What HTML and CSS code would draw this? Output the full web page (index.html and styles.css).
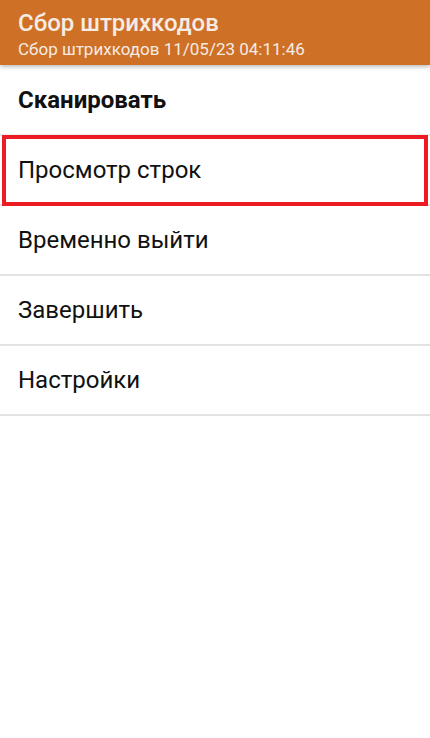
FILE: index.html
```html
<!DOCTYPE html>
<html lang="ru">

<head>
    <meta charset="UTF-8">
    <meta name="viewport" content="width=device-width, initial-scale=1.0">
    <title>Сбор штрихкодов</title>
    <link rel="stylesheet" href="styles.css">
</head>

<body>
    <header class="app-bar">
        <div class="app-title">Сбор штрихкодов</div>
        <div class="app-subtitle">Сбор штрихкодов 11/05/23 04:11:46</div>
    </header>

    <ul class="menu">
        <li class="menu-item menu-head">Сканировать</li>
        <li class="menu-item highlighted">Просмотр строк</li>
        <li class="menu-item">Временно выйти</li>
        <li class="menu-item">Завершить</li>
        <li class="menu-item">Настройки</li>
    </ul>
</body>

</html>
```

FILE: styles.css
```css
body,
html {
    margin: 0;
    padding: 0;
    background-color: #fff;
    font-family: Roboto, 'Noto Sans', sans-serif;
}

.app-bar {
    position: relative;
    z-index: 1;
    height: 65px;
    box-sizing: border-box;
    padding: 9px 18px 0;
    background-color: #cf7027;
    color: #f5ece4;
    box-shadow: 0 2px 4px rgba(0, 0, 0, 0.25);
}

.app-title {
    font-size: 24px;
    font-weight: 500;
    line-height: 29px;
}

.app-subtitle {
    font-size: 17px;
    line-height: 22px;
}

.menu {
    list-style: none;
    margin: 0;
    padding: 0;
}

.menu-item {
    position: relative;
    height: 68px;
    padding: 0 18px;
    display: flex;
    align-items: center;
    font-size: 24px;
    color: #111;
    border-bottom: 2px solid #e3e3e3;
}

.menu-head {
    font-weight: bold;
    height: 69px;
    border-bottom-color: #ececec;
}

/* red frame drawn over the row */
.highlighted::after {
    content: "";
    position: absolute;
    left: 2px;
    right: 2px;
    top: -1px;
    bottom: -2px;
    border: 4px solid #ed1c24;
}
```
